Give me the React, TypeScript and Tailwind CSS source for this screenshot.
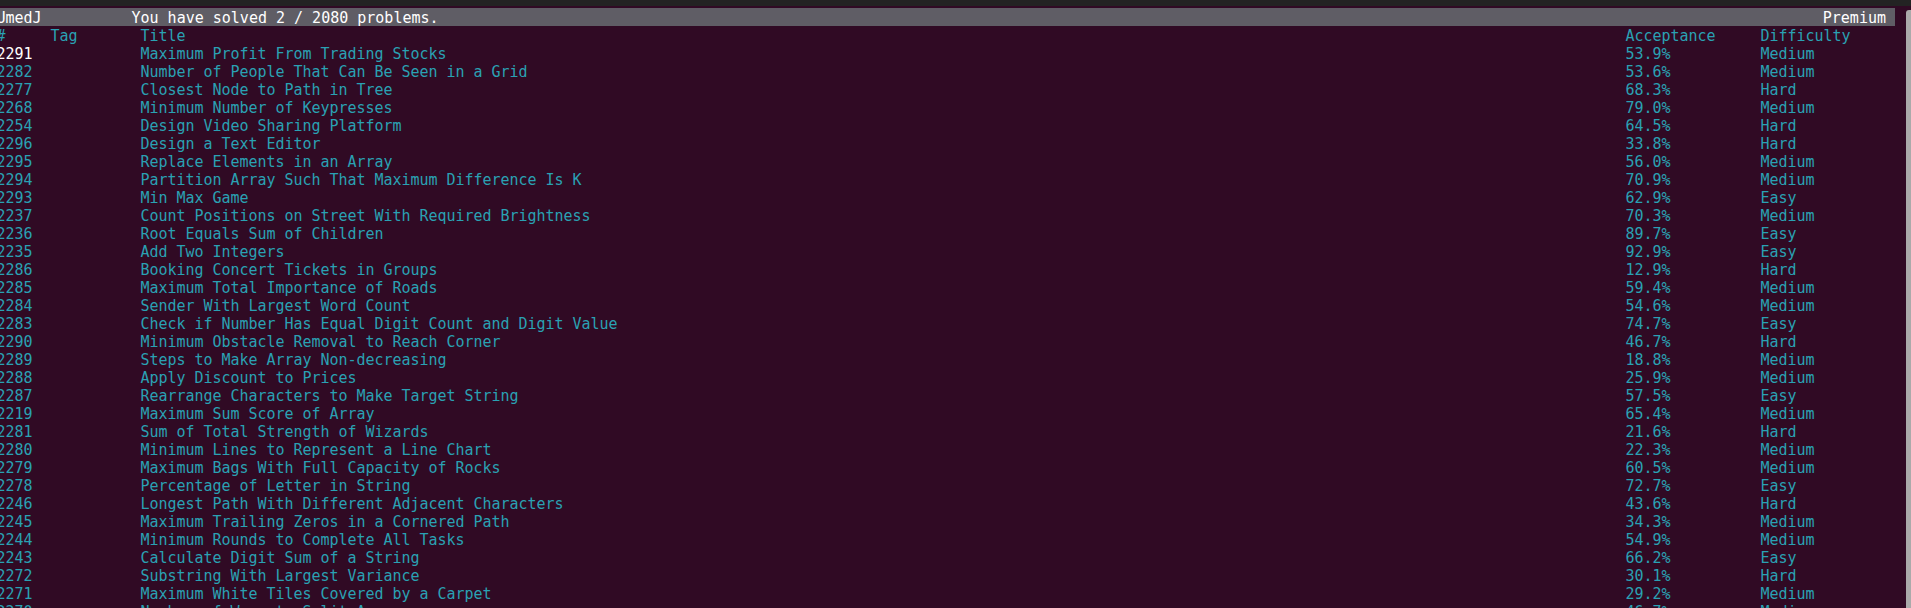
const problems: [string, string, string, string][] = [
  ["2291", "Maximum Profit From Trading Stocks", "53.9%", "Medium"],
  ["2282", "Number of People That Can Be Seen in a Grid", "53.6%", "Medium"],
  ["2277", "Closest Node to Path in Tree", "68.3%", "Hard"],
  ["2268", "Minimum Number of Keypresses", "79.0%", "Medium"],
  ["2254", "Design Video Sharing Platform", "64.5%", "Hard"],
  ["2296", "Design a Text Editor", "33.8%", "Hard"],
  ["2295", "Replace Elements in an Array", "56.0%", "Medium"],
  ["2294", "Partition Array Such That Maximum Difference Is K", "70.9%", "Medium"],
  ["2293", "Min Max Game", "62.9%", "Easy"],
  ["2237", "Count Positions on Street With Required Brightness", "70.3%", "Medium"],
  ["2236", "Root Equals Sum of Children", "89.7%", "Easy"],
  ["2235", "Add Two Integers", "92.9%", "Easy"],
  ["2286", "Booking Concert Tickets in Groups", "12.9%", "Hard"],
  ["2285", "Maximum Total Importance of Roads", "59.4%", "Medium"],
  ["2284", "Sender With Largest Word Count", "54.6%", "Medium"],
  ["2283", "Check if Number Has Equal Digit Count and Digit Value", "74.7%", "Easy"],
  ["2290", "Minimum Obstacle Removal to Reach Corner", "46.7%", "Hard"],
  ["2289", "Steps to Make Array Non-decreasing", "18.8%", "Medium"],
  ["2288", "Apply Discount to Prices", "25.9%", "Medium"],
  ["2287", "Rearrange Characters to Make Target String", "57.5%", "Easy"],
  ["2219", "Maximum Sum Score of Array", "65.4%", "Medium"],
  ["2281", "Sum of Total Strength of Wizards", "21.6%", "Hard"],
  ["2280", "Minimum Lines to Represent a Line Chart", "22.3%", "Medium"],
  ["2279", "Maximum Bags With Full Capacity of Rocks", "60.5%", "Medium"],
  ["2278", "Percentage of Letter in String", "72.7%", "Easy"],
  ["2246", "Longest Path With Different Adjacent Characters", "43.6%", "Hard"],
  ["2245", "Maximum Trailing Zeros in a Cornered Path", "34.3%", "Medium"],
  ["2244", "Minimum Rounds to Complete All Tasks", "54.9%", "Medium"],
  ["2243", "Calculate Digit Sum of a String", "66.2%", "Easy"],
  ["2272", "Substring With Largest Variance", "30.1%", "Hard"],
  ["2271", "Maximum White Tiles Covered by a Carpet", "29.2%", "Medium"],
  ["2270", "Number of Ways to Split Array", "46.7%", "Medium"],
];

function Row({ cells, first }: { cells: string[]; first?: boolean }) {
  return (
    <div className="grid grid-cols-[54px_90px_1485px_135px_1fr] h-[18px] pt-[1px] leading-[18px] whitespace-pre text-[#2aa1b3]">
      <span className={first ? "text-white" : ""}>{cells[0]}</span>
      <span>{cells[1]}</span>
      <span>{cells[2]}</span>
      <span>{cells[3]}</span>
      <span>{cells[4]}</span>
    </div>
  );
}

export default function App() {
  return (
    <div
      className="h-[608px] w-full overflow-hidden bg-[#300a24] flex flex-col text-[15px]"
      style={{ fontFamily: '"DejaVu Sans Mono", "Liberation Mono", monospace' }}
    >
      <div className="h-[6px] bg-[#232323] shrink-0" />
      <div className="flex flex-1 min-h-0 pt-[2px]">
        <div className="w-[1906px] shrink-0 overflow-hidden">
          <div className="w-[1895px] h-[18px] pt-[1px] leading-[18px] bg-[#5f5d65] text-white flex whitespace-pre pr-[9px] overflow-hidden">
            <div className="ml-[-3.5px] w-[135px]">UmedJ</div>
            <div className="flex-1">You have solved 2 / 2080 problems.</div>
            <div>Premium</div>
          </div>
          <div className="ml-[-3.5px] tracking-[-0.03px]">
            <Row cells={["#", "Tag", "Title", "Acceptance", "Difficulty"]} />
            {problems.map((p, i) => (
              <Row key={p[0]} cells={[p[0], "", p[1], p[2], p[3]]} first={i === 0} />
            ))}
          </div>
        </div>
        <div className="flex-1 pt-[2px]">
          <div className="h-full w-[5px] ml-auto bg-[#aaaaaa] rounded-tl-[3px]" />
        </div>
      </div>
    </div>
  );
}
